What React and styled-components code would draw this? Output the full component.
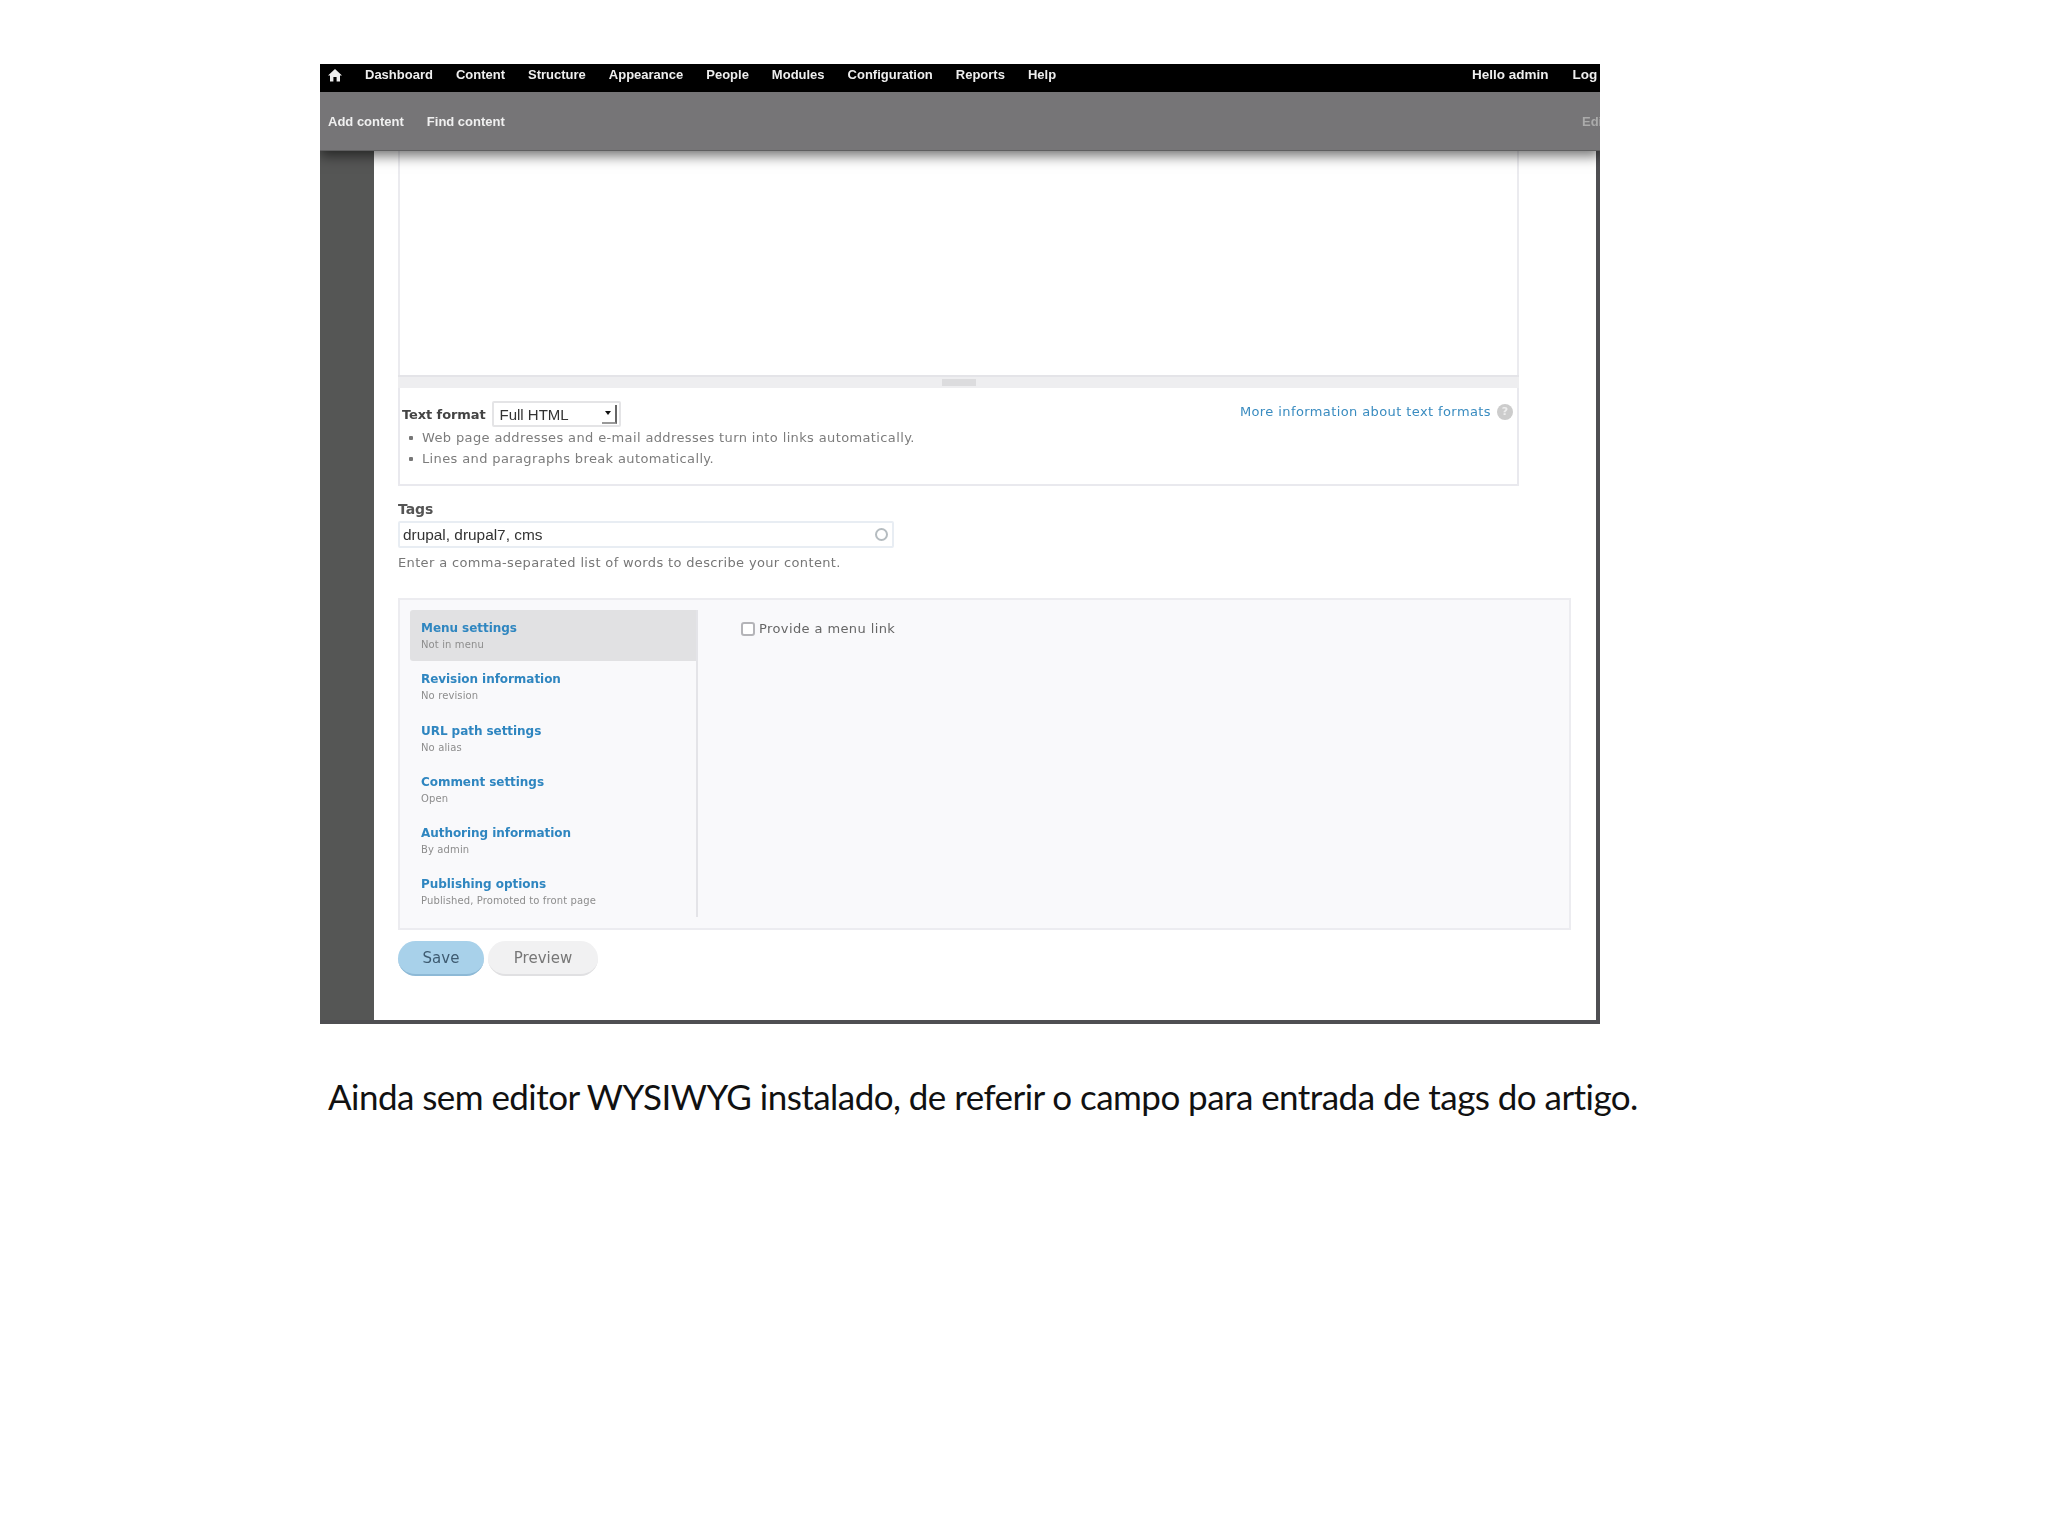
import React from 'react'
import styled, { createGlobalStyle } from 'styled-components'

const GlobalStyle = createGlobalStyle`
  html, body {
    margin: 0;
    background: #fff;
  }
`

const Slide = styled.div`
  width: 2048px;
  height: 1536px;
  padding: 64px 0 0 320px;
  box-sizing: border-box;
  overflow: hidden;
`

const Shot = styled.div`
  width: 1280px;
  height: 960px;
  overflow: hidden;
  display: flex;
  flex-direction: column;
  filter: blur(0.7px);
  font-family: "DejaVu Sans", sans-serif;
`

const TopBar = styled.div`
  height: 28px;
  box-sizing: border-box;
  padding: 0 0 7px 8px;
  background: #000;
  display: flex;
  align-items: center;
  flex: none;
  color: #eee;
  font: bold 13px "Liberation Sans", sans-serif;
  white-space: nowrap;
`

const HomeLink = styled.svg`
  width: 14px;
  height: 14px;
  margin-right: 23px;
  fill: #eee;
  flex: none;
`

const MainMenu = styled.div`
  display: flex;
  gap: 23px;
  flex: 1;
`

const UserMenu = styled.div`
  display: flex;
  gap: 24px;
  width: 128px;
  flex: none;
  font-size: 13.5px;
`

const SubBar = styled.div`
  height: 59px;
  flex: none;
  background: #767577;
  border-bottom: 1px solid #5f5f60;
  box-sizing: border-box;
  display: flex;
  align-items: center;
  justify-content: space-between;
  padding: 1px 0 0 8px;
  color: #f0f0f0;
  font: bold 13px "Liberation Sans", sans-serif;
  box-shadow: 0 5px 12px rgba(0, 0, 0, 0.55);
  position: relative;
  z-index: 2;
`

const SubLinks = styled.div`
  display: flex;
  gap: 23px;
`

const EditLink = styled.span`
  color: #ababab;
  width: 18px;
  overflow: hidden;
`

const Body = styled.div`
  flex: 1;
  display: flex;
  min-height: 0;
  background: #fff;
  border-right: 4px solid #4f4f52;
  border-bottom: 4px solid #4f4f52;
`

const Sidebar = styled.div`
  width: 54px;
  flex: none;
  background: #555655;
`

const Content = styled.div`
  flex: 1;
  padding-left: 24px;
  display: flex;
  flex-direction: column;
  align-items: flex-start;
`

const Editor = styled.div`
  width: 1121px;
  height: 224px;
  flex: none;
  box-sizing: border-box;
  border-left: 2px solid #ebebef;
  border-right: 2px solid #ebebef;
  background: #fff;
`

const Grippie = styled.div`
  width: 1121px;
  height: 13px;
  flex: none;
  background: #eeeef0;
  border-top: 2px solid #e4e4e8;
  box-sizing: border-box;
  display: flex;
  align-items: center;
  justify-content: center;
  &::after {
    content: '';
    width: 34px;
    height: 7px;
    background: #dcdcde;
  }
`

const FormatBox = styled.div`
  width: 1121px;
  height: 98px;
  flex: none;
  box-sizing: border-box;
  border: 2px solid #e9e9ee;
  border-top: 0;
  padding: 13px 0 0 2px;
`

const FormatRow = styled.div`
  display: flex;
  align-items: center;
  justify-content: space-between;
  padding-right: 4px;
`

const FormatPick = styled.div`
  display: flex;
  align-items: center;
  gap: 6px;
`

const FieldLabel = styled.span`
  font-size: 13px;
  font-weight: bold;
  color: #444;
  letter-spacing: -0.1px;
`

const FakeSelect = styled.div`
  width: 129px;
  height: 26px;
  box-sizing: border-box;
  border: 2px solid #e4e4e6;
  border-radius: 2px;
  display: flex;
  align-items: center;
  justify-content: space-between;
  padding: 0 2px 0 6px;
  font: 15px "Liberation Sans", sans-serif;
  color: #333;
`

const SelectArrow = styled.span`
  width: 15px;
  height: 19px;
  box-sizing: border-box;
  border-right: 2px solid #666;
  border-bottom: 2px solid #999;
  display: flex;
  align-items: center;
  justify-content: center;
  &::after {
    content: '';
    border: 3px solid transparent;
    border-top: 4px solid #111;
    margin-top: 3px;
  }
`

const InfoLink = styled.div`
  display: flex;
  align-items: center;
  gap: 6px;
  color: #3a8cc0;
  font-size: 13px;
  letter-spacing: 0.4px;
  margin-top: -5px;
`

const HelpIcon = styled.span`
  width: 16px;
  height: 16px;
  border-radius: 50%;
  background: #ccc;
  color: #eee;
  font-size: 11px;
  font-weight: bold;
  letter-spacing: 0;
  display: flex;
  align-items: center;
  justify-content: center;
`

const Tips = styled.ul`
  margin: 0;
  padding: 0 0 0 20px;
  list-style: none;
`

const Tip = styled.li`
  height: 21px;
  line-height: 21px;
  font-size: 13px;
  letter-spacing: 0.37px;
  color: #7c7c7c;
  position: relative;
  &::before {
    content: '';
    position: absolute;
    left: -13px;
    top: 9px;
    width: 4px;
    height: 4px;
    border-radius: 1px;
    background: #777;
  }
`

const TagsLabel = styled(FieldLabel)`
  margin-top: 14px;
  height: 21px;
  line-height: 18px;
  font-size: 14px;
  color: #555;
`

const TagsInput = styled.div`
  width: 496px;
  height: 27px;
  flex: none;
  box-sizing: border-box;
  border: 2px solid #e8edf3;
  border-radius: 2px;
  padding: 0 4px 0 3px;
  display: flex;
  align-items: center;
  justify-content: space-between;
  font: 15.4px "Liberation Sans", sans-serif;
  color: #333;
`

const Throbber = styled.span`
  width: 13px;
  height: 13px;
  box-sizing: border-box;
  border-radius: 50%;
  border: 2px solid #b5bcc0;
`

const HelpText = styled.div`
  margin-top: 7px;
  font-size: 13px;
  letter-spacing: 0.35px;
  color: #777;
  line-height: 16px;
`

const VerticalTabs = styled.div`
  margin-top: 27px;
  width: 1173px;
  height: 332px;
  flex: none;
  box-sizing: border-box;
  background: #f9f9fb;
  border: 2px solid #ececf0;
  padding: 10px 0 11px 10px;
  display: flex;
`

const TabList = styled.div`
  width: 288px;
  flex: none;
  border-right: 2px solid #e4e4e8;
  box-sizing: border-box;
  display: flex;
  flex-direction: column;
`

const Tab = styled.div`
  height: 51.3px;
  flex: none;
  box-sizing: border-box;
  padding: 11px 0 0 11px;
  background: ${p => (p.$active ? '#e1e1e3' : 'transparent')};
  border-radius: ${p => (p.$active ? '3px 0 0 3px' : '0')};
`

const TabTitle = styled.div`
  font-size: 12px;
  font-weight: bold;
  line-height: 15px;
  color: #2f86c0;
  letter-spacing: -0.05px;
`

const TabNote = styled.div`
  margin-top: 3px;
  font-size: 10px;
  letter-spacing: 0.12px;
  line-height: 12px;
  color: #8d8d8d;
`

const TabPane = styled.div`
  padding: 11px 0 0 43px;
  display: flex;
  align-items: flex-start;
  gap: 4px;
`

const CheckBox = styled.span`
  width: 14px;
  height: 14px;
  margin-top: 1px;
  box-sizing: border-box;
  border: 2px solid #b4b4b8;
  border-radius: 3px;
  background: #fff;
`

const CheckLabel = styled.span`
  font-size: 13px;
  letter-spacing: 0.4px;
  line-height: 16px;
  color: #666;
`

const Actions = styled.div`
  margin-top: 11px;
  display: flex;
  gap: 4px;
`

const Button = styled.div`
  height: 35px;
  width: ${p => p.$width}px;
  box-sizing: border-box;
  border-radius: 18px;
  display: flex;
  align-items: center;
  justify-content: center;
  font-size: 15px;
  color: ${p => (p.$primary ? '#3f5c72' : '#777')};
  background: ${p => (p.$primary ? '#a8d1ea' : '#f1f1f2')};
  border-bottom: 2px solid ${p => (p.$primary ? '#8db9d6' : '#e0e0e2')};
`

const Caption = styled.p`
  margin: 50px 0 0 8px;
  font: 35px/44px Lato, sans-serif;
  color: #111;
  white-space: nowrap;
  letter-spacing: -0.55px;
`

const menuItems = ['Dashboard', 'Content', 'Structure', 'Appearance', 'People', 'Modules', 'Configuration', 'Reports', 'Help']

const tabs = [
  ['Menu settings', 'Not in menu'],
  ['Revision information', 'No revision'],
  ['URL path settings', 'No alias'],
  ['Comment settings', 'Open'],
  ['Authoring information', 'By admin'],
  ['Publishing options', 'Published, Promoted to front page'],
]

export default function App() {
  return (
    <Slide>
      <GlobalStyle />
      <Shot>
        <TopBar>
          <HomeLink viewBox="0 0 14 14">
            <path d="M7 1 L14 7.5 H12 V13.5 H8.6 V9 H5.4 V13.5 H2 V7.5 H0 Z" />
          </HomeLink>
          <MainMenu>
            {menuItems.map(item => <span key={item}>{item}</span>)}
          </MainMenu>
          <UserMenu>
            <span>Hello admin</span>
            <span>Log</span>
          </UserMenu>
        </TopBar>
        <SubBar>
          <SubLinks>
            <span>Add content</span>
            <span>Find content</span>
          </SubLinks>
          <EditLink>Edit</EditLink>
        </SubBar>
        <Body>
          <Sidebar />
          <Content>
            <Editor />
            <Grippie />
            <FormatBox>
              <FormatRow>
                <FormatPick>
                  <FieldLabel>Text format</FieldLabel>
                  <FakeSelect>
                    Full HTML
                    <SelectArrow />
                  </FakeSelect>
                </FormatPick>
                <InfoLink>
                  More information about text formats
                  <HelpIcon>?</HelpIcon>
                </InfoLink>
              </FormatRow>
              <Tips>
                <Tip>Web page addresses and e-mail addresses turn into links automatically.</Tip>
                <Tip>Lines and paragraphs break automatically.</Tip>
              </Tips>
            </FormatBox>
            <TagsLabel>Tags</TagsLabel>
            <TagsInput>
              drupal, drupal7, cms
              <Throbber />
            </TagsInput>
            <HelpText>Enter a comma-separated list of words to describe your content.</HelpText>
            <VerticalTabs>
              <TabList>
                {tabs.map(([title, note], i) => (
                  <Tab key={title} $active={i === 0}>
                    <TabTitle>{title}</TabTitle>
                    <TabNote>{note}</TabNote>
                  </Tab>
                ))}
              </TabList>
              <TabPane>
                <CheckBox />
                <CheckLabel>Provide a menu link</CheckLabel>
              </TabPane>
            </VerticalTabs>
            <Actions>
              <Button $primary $width={86}>Save</Button>
              <Button $width={110}>Preview</Button>
            </Actions>
          </Content>
        </Body>
      </Shot>
      <Caption>Ainda sem editor WYSIWYG instalado, de referir o campo para entrada de tags do artigo.</Caption>
    </Slide>
  )
}
